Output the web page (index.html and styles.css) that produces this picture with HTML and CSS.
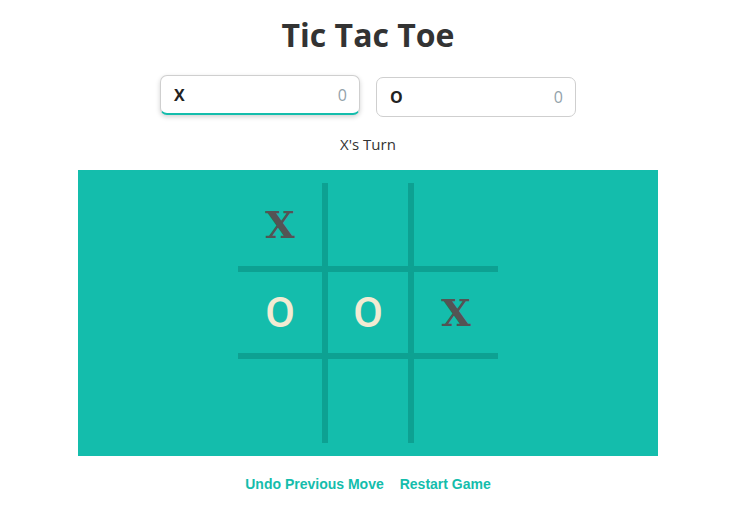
FILE: index.html
```html
<!DOCTYPE html>
<html lang="en">
<head>
<meta charset="utf-8">
<title>Tic Tac Toe</title>
<link rel="stylesheet" href="styles.css">
</head>
<body>
<div class="app">
  <h1 class="title">Tic Tac Toe</h1>
  <div class="scores">
    <div class="score active"><span class="player">X</span><span class="count">0</span></div>
    <div class="score"><span class="player">O</span><span class="count">0</span></div>
  </div>
  <p class="turn">X's Turn</p>
  <div class="board">
    <div class="grid">
      <div class="cell x">X</div>
      <div class="cell"></div>
      <div class="cell"></div>
      <div class="cell o">O</div>
      <div class="cell o">O</div>
      <div class="cell x">X</div>
      <div class="cell"></div>
      <div class="cell"></div>
      <div class="cell"></div>
    </div>
  </div>
  <div class="actions">
    <button class="action">Undo Previous Move</button>
    <button class="action">Restart Game</button>
  </div>
</div>
</body>
</html>
```

FILE: styles.css
```css
html, body {
  margin: 0;
  padding: 0;
  background: #fff;
}
body {
  padding-left: 5px;
  font-family: "Open Sans", "Noto Sans", sans-serif;
  color: #333;
}
.app {
  width: 580px;
  margin: 0 auto;
}
.title {
  margin: 0;
  padding-top: 13px;
  font-size: 32px;
  line-height: 44px;
  font-weight: 700;
  text-align: center;
  color: #333;
}
.scores {
  display: flex;
  justify-content: center;
  gap: 16px;
  margin-top: 20px;
}
.score {
  box-sizing: border-box;
  width: 200px;
  height: 40px;
  padding: 0 12px 0 13px;
  border: 1px solid #cfcfcf;
  border-radius: 7px;
  display: flex;
  align-items: center;
  justify-content: space-between;
  background: #fff;
}
.score.active {
  border-bottom: 2px solid #14bdac;
  box-shadow: 0 2px 5px rgba(0, 0, 0, 0.18);
  transform: translateY(-2px);
}
.player {
  font-weight: 700;
  font-size: 16px;
  color: #222;
}
.count {
  font-size: 16px;
  color: #93a2ab;
}
.turn {
  margin: 16px 0 0;
  text-align: center;
  font-size: 15px;
  line-height: 22px;
  color: #333;
}
.board {
  margin-top: 15px;
  background: #14bdac;
  padding: 13px 0;
  display: flex;
  justify-content: center;
}
.grid {
  display: grid;
  grid-template-columns: 84px 80px 84px;
  grid-template-rows: 83px 81px 84px;
  gap: 6px;
  background: #0da192;
}
.cell {
  background: #14bdac;
  display: flex;
  align-items: center;
  justify-content: center;
  font-family: "DejaVu Serif", "Liberation Serif", serif;
  font-size: 38px;
  line-height: 1;
}
.cell.x {
  color: #545454;
  font-weight: 700;
}
.cell.o {
  color: #f2ebd3;
  font-family: Roboto, "Noto Sans", sans-serif;
  font-weight: 500;
  font-size: 43px;
}
.actions {
  display: flex;
  justify-content: center;
  gap: 16px;
  margin-top: 20px;
}
.action {
  border: 0;
  background: none;
  padding: 0;
  font-family: "Liberation Sans", Arial, sans-serif;
  font-weight: 700;
  font-size: 14px;
  color: #14bdac;
  cursor: pointer;
}
```
